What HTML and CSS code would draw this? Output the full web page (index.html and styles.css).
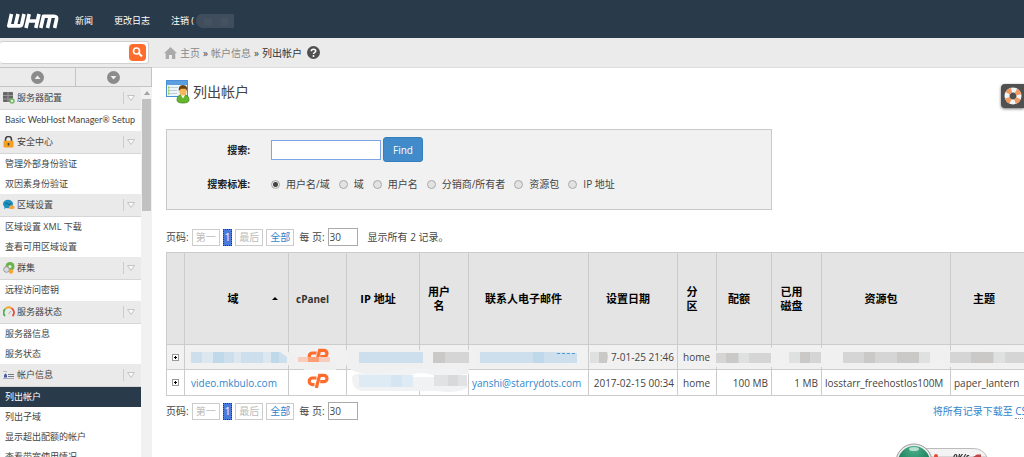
FILE: index.html
```html
<!DOCTYPE html>
<html lang="zh-CN">
<head>
<meta charset="utf-8">
<title>WHM - 列出帐户</title>
<link rel="stylesheet" href="styles.css">
</head>
<body>
<svg class="defs" aria-hidden="true">
  <defs>
    <symbol id="chev" viewBox="0 0 16 12"><path d="M1.500 0V12" stroke="#ccc" fill="none"/><path d="M5.500 3.500h7l-3.500 5z" fill="#fafafa" stroke="#c4c4c4"/></symbol>
    <symbol id="cp" viewBox="0 0 22 15"><g fill="none" stroke="#ff6c2c" stroke-width="3.200"><path d="M9.500 5H5.500a3.300 3.300 0 0 0 0 6.600H7.500"/><path d="M9.300 15L12.600 2.300h4.200a3.100 3.100 0 0 1 0 6.400h-3.600"/></g></symbol>
    <symbol id="plus" viewBox="0 0 7 7"><rect x=".5" y=".5" width="6" height="6" fill="#fff" stroke="#999"/><path d="M2 3.500h3M3.500 2v3" stroke="#000"/></symbol>
  </defs>
</svg>

<header class="top">
  <svg class="logo" viewBox="0 0 53 16" role="img" aria-label="WHM"><g fill="none" stroke="#fff" stroke-width="3.600" stroke-linejoin="round"><path d="M5.500 1L2.800 12.900H13.500Q15.300 12.900 15.800 11L18 1M12 1L9.200 12.900"/><path d="M23.200 1L20 15M33 1L29.800 15M22 8H31"/><path d="M34.800 15L37.500 3.200H48Q51.300 3.200 50.500 6.500L48.600 15M44.200 3.200L41.500 15"/></g></svg>
  <nav class="top-links">
    <a href="#">新闻</a>
    <a href="#">更改日志</a>
    <a href="#" class="logout">注销 (<svg viewBox="0 0 38 14" aria-hidden="true"><path d="M5 0H38V14H6Q0 12 0 7Q0 1 5 0z" fill="#3f4d5d"/><path d="M8 5h8v6H8zM25 4h7v7h-7z" fill="#445262"/></svg></a>
  </nav>
</header>

<div class="frame">
  <aside class="side">
    <form class="search">
      <input type="text" aria-label="搜索菜单">
      <button type="button" aria-label="搜索"><svg viewBox="0 0 17 17"><circle cx="7.500" cy="7" r="3" fill="none" stroke="#fff" stroke-width="1.600"/><path d="M9.800 9.300L13 12.500" stroke="#fff" stroke-width="2"/></svg></button>
    </form>
    <div class="steps">
      <button type="button" aria-label="全部折叠"><svg viewBox="0 0 13 13"><circle cx="6.500" cy="6.500" r="6.500" fill="#8b8b8b"/><path d="M3.500 8L6.500 4.500L9.500 8z" fill="#eee"/></svg></button>
      <button type="button" aria-label="全部展开"><svg viewBox="0 0 13 13"><circle cx="6.500" cy="6.500" r="6.500" fill="#8b8b8b"/><path d="M3.500 5L6.500 8.500L9.500 5z" fill="#eee"/></svg></button>
    </div>
    <div class="menu-wrap">
      <nav class="menu">
        <section class="group">
          <h2><svg class="ico" viewBox="0 0 12 12"><rect x="0" y="0" width="10" height="10" rx="1" fill="#666"/><path d="M0 3.500H10M0 7H10M5 0V10" stroke="#999"/><circle cx="9" cy="9" r="2.800" fill="#7db96c"/><circle cx="9" cy="9" r="1" fill="#fff"/></svg><span>服务器配置</span><svg class="chev"><use href="#chev"/></svg></h2>
          <a href="#" class="latin">Basic WebHost Manager® Setup</a>
        </section>
        <section class="group">
          <h2><svg class="ico" viewBox="0 0 12 12"><path d="M2.500 6V3.500a3 3 0 0 1 6 0V6" fill="none" stroke="#444" stroke-width="1.600"/><rect x=".5" y="4.800" width="10" height="6.700" rx="1" fill="#f5a01e"/><rect x="4.700" y="7" width="1.600" height="2.500" fill="#444"/></svg><span>安全中心</span><svg class="chev"><use href="#chev"/></svg></h2>
          <a href="#">管理外部身份验证</a>
          <a href="#">双因素身份验证</a>
        </section>
        <section class="group">
          <h2><svg class="ico" viewBox="0 0 12 12"><ellipse cx="5" cy="5" rx="5" ry="4.200" fill="#1d91bd"/><path d="M1 10l1-3 3 1z" fill="#1d91bd"/><path d="M2 5q1.500-2 3 0t3-1" fill="none" stroke="#0b6287"/><rect x="6" y="6.500" width="5.500" height="3.500" rx="1.500" fill="#f9a33a"/></svg><span>区域设置</span><svg class="chev"><use href="#chev"/></svg></h2>
          <a href="#">区域设置 XML 下载</a>
          <a href="#">查看可用区域设置</a>
        </section>
        <section class="group">
          <h2><svg class="ico" viewBox="0 0 12 12"><circle cx="7" cy="4.500" r="4.500" fill="#6cb24a"/><circle cx="7" cy="4.500" r="1.500" fill="#e5f3df"/><circle cx="3.500" cy="7.500" r="2.800" fill="#ddd" stroke="#999"/><circle cx="8" cy="9.500" r="2.200" fill="#f5a733"/></svg><span>群集</span><svg class="chev"><use href="#chev"/></svg></h2>
          <a href="#">远程访问密钥</a>
        </section>
        <section class="group">
          <h2><svg class="ico" viewBox="0 0 12 12"><g fill="none" stroke-width="1.800"><path d="M2 10A4.800 4.800 0 0 1 2.200 3" stroke="#4fae4c"/><path d="M2.200 3A4.800 4.800 0 0 1 8.500 2.300" stroke="#f2a530"/><path d="M8.500 2.300A4.800 4.800 0 0 1 9.500 10" stroke="#e04f3b"/><path d="M5.500 8L8 5" stroke="#aaa" stroke-width="1"/></g></svg><span>服务器状态</span><svg class="chev"><use href="#chev"/></svg></h2>
          <a href="#">服务器信息</a>
          <a href="#">服务状态</a>
        </section>
        <section class="group">
          <h2><svg class="ico" viewBox="0 0 12 12"><path d="M0 2.500H4" stroke="#bbb"/><path d="M1 8.500V6.500q1.500-4 3 0V8.500z" fill="#3c58a8"/><path d="M5 5.500H11M5 7.500H11" stroke="#778" stroke-width="1.200"/><path d="M0 9.500H11" stroke="#aab"/></svg><span>帐户信息</span><svg class="chev"><use href="#chev"/></svg></h2>
          <a href="#" class="current">列出帐户</a>
          <a href="#">列出子域</a>
          <a href="#">显示超出配额的帐户</a>
          <a href="#">查看带宽使用情况</a>
        </section>
      </nav>
      <div class="scroll" aria-hidden="true"><i class="arrow"></i><i class="thumb"></i></div>
    </div>
  </aside>

  <main class="main">
    <nav class="crumbs">
      <svg class="home" viewBox="0 0 13 12"><path d="M6.500 0L13 6.200H11.300V12H8V8H5V12H1.700V6.200H0z" fill="#aaa"/></svg>
      <a href="#">主页</a><b>»</b><a href="#">帐户信息</a><b>»</b><span>列出帐户</span>
      <svg class="help" viewBox="0 0 13 13"><circle cx="6.500" cy="6.500" r="6.500" fill="#505050"/><path d="M4.300 5.200Q4.300 3.200 6.500 3.200T8.700 5Q8.700 6 7.500 6.600Q6.500 7.100 6.500 8" fill="none" stroke="#fff" stroke-width="1.600"/><circle cx="6.500" cy="10" r="1" fill="#fff"/></svg>
    </nav>

    <div class="content">
      <h1><svg viewBox="0 0 24 24"><rect x=".5" y=".5" width="21" height="16" fill="#eef6fd" stroke="#4c8fd6"/><rect x="1" y="1" width="20" height="4" fill="#5b9fe3"/><path d="M4 7.500H12M4 10.500H11M4 13.500H11" stroke="#c3cbd4"/><path d="M2 7.500h1.500M2 10.500h1.500M2 13.500h1.500" stroke="#8cc63f" stroke-width="2"/><path d="M11 20Q11 14.500 17 14.500T23 20Q23 23 17 23T11 20z" fill="#66b52e" stroke="#3f8a1c" stroke-width=".8"/><path d="M15 15l2 3.500 2-3.500z" fill="#fff"/><ellipse cx="17" cy="11" rx="3.600" ry="4.500" fill="#f6b65a"/><path d="M12.800 11Q12 5 17 5T21.200 11L19.500 8.800H15z" fill="#6c4313"/></svg>列出帐户</h1>

      <form class="panel">
        <label class="caption" for="q">搜索:</label>
        <div class="field"><input id="q" type="text"><button type="button">Find</button></div>
        <span class="caption">搜索标准:</span>
        <div class="radios">
          <label><input type="radio" name="by" checked>用户名/域</label>
          <label><input type="radio" name="by">域</label>
          <label><input type="radio" name="by">用户名</label>
          <label><input type="radio" name="by">分销商/所有者</label>
          <label><input type="radio" name="by">资源包</label>
          <label><input type="radio" name="by">IP 地址</label>
        </div>
      </form>

      <div class="pager">
        <span>页码:</span>
        <button type="button" disabled>第一</button><button type="button" class="page">1</button><button type="button" disabled>最后</button><button type="button">全部</button>
        <label for="per1">每 页:</label><input id="per1" type="text" value="30">
        <span class="total">显示所有 2 记录。</span>
      </div>

      <div class="grid">
        <table>
          <colgroup><col class="c-open"><col class="c-domain"><col class="c-cp"><col class="c-ip"><col class="c-user"><col class="c-mail"><col class="c-date"><col class="c-part"><col class="c-quota"><col class="c-disk"><col class="c-pack"><col class="c-theme"></colgroup>
          <thead>
            <tr><th></th><th class="sorted"><div><span>域</span><i></i></div></th><th class="brand">cPanel</th><th>IP 地址</th><th>用户<br>名</th><th>联系人电子邮件</th><th>设置日期</th><th>分<br>区</th><th>配额</th><th>已用<br>磁盘</th><th>资源包</th><th>主题</th></tr>
          </thead>
          <tbody>
            <tr class="odd"><td class="mid"><svg class="plus"><use href="#plus"/></svg></td><td></td><td class="mid logo-cell"><svg class="cp"><use href="#cp"/></svg></td><td></td><td></td><td></td><td class="num">7-01-25 21:46</td><td class="part">home</td><td></td><td></td><td></td><td></td></tr>
            <tr><td class="mid"><svg class="plus"><use href="#plus"/></svg></td><td class="domain"><a href="#">video.mkbulo.com</a></td><td class="mid logo-cell"><svg class="cp"><use href="#cp"/></svg></td><td></td><td></td><td><a href="#">yanshi@starrydots.com</a></td><td class="num">2017-02-15 00:34</td><td class="part">home</td><td class="num">100 MB</td><td class="num">1 MB</td><td>losstarr_freehostlos100M</td><td>paper_lantern</td></tr>
          </tbody>
        </table>
        <svg class="masks" viewBox="0 0 862 51" aria-hidden="true">
          <g fill="#f0f0f0">
            <path d="M22 5H112Q128 8 137 12V24Q128 25 118 17H22z"/>
            <path d="M180 5Q190 2 250 5H303V29H200Q180 26 180 18z"/>
            <path d="M310 5H400V22H310zM424 6H440V18H424z"/>
            <path d="M550 6Q600 0 700 4L862 7V22H550z"/>
          </g>
          <path d="M186 33Q186 27 200 29L240 24H290Q304 34 302 42Q295 49 270 46H195Q186 44 186 33z" fill="#f1f2f3"/>
          <path d="M240 32Q254 24 272 32z" fill="#fff"/>
          <g fill="#cddfec"><path d="M25 7H114L121 12V18H25zM193 7H257V18H193zM314 7H387L411 8V18H314z"/></g>
          <path d="M36 7h11v11H36zM68 7h7v11h-7zM97 7h8v11h-8z" fill="#dde7ef"/>
          <path d="M47 7h11v11H47zM105 7h8v11h-8zM367 7h11v11h-11z" fill="#bfd8ea"/>
          <path d="M391 8.500h20" stroke="#4a9bd5" stroke-dasharray="3 2"/>
          <path d="M193 30h54v12h-54z" fill="#dfebf4"/><path d="M225 30h11v12h-11z" fill="#d5e5f1"/>
          <path d="M268 30h33v11h-33z" fill="#e1e2e3"/><path d="M282 30h10v11h-10z" fill="#d8d9da"/>
          <g fill="#d5d5d5"><path d="M267 7h36v11h-36zM424 7h17q3 5-1 11h-16zM550 8h55v10h-55zM623 7h32v11h-32zM677 7h87v11h-87zM784 7h78v11h-78z"/></g>
          <path d="M267 7h12v11h-12zM433 7h8v11h-8zM560 8h12v10h-12zM634 7h10v11h-10zM698 7h11v11h-11zM731 7h22v11h-22zM805 7h22v11h-22z" fill="#cac9c8"/>
          <path d="M424 7h9v11h-9zM573 8h10v10h-10zM623 7h11v11h-11zM753 7h11v11h-11zM828 7h11v11h-11z" fill="#dfe1e1"/>
          <path d="M132 12h32v5h-32z" fill="#f8cdbd"/><path d="M142 12h11v5h-11z" fill="#fc9d73"/><path d="M138 17h32v8h-32z" fill="#efefef"/>
        </svg>
      </div>

      <div class="pager foot">
        <span>页码:</span>
        <button type="button" disabled>第一</button><button type="button" class="page">1</button><button type="button" disabled>最后</button><button type="button">全部</button>
        <label for="per2">每 页:</label><input id="per2" type="text" value="30">
        <a class="csv" href="#">将所有记录下载至 <abbr>CSV</abbr></a>
      </div>
    </div>
  </main>
</div>

<button type="button" class="support" aria-label="支持"><svg viewBox="0 0 18 18"><circle cx="9" cy="9" r="6" fill="none" stroke="#f1f6fa" stroke-width="5"/><circle cx="9" cy="9" r="6" fill="none" stroke="#f39a62" stroke-width="5" stroke-dasharray="4.700 4.720" stroke-dashoffset="-2.400"/></svg></button>

<svg class="speed" viewBox="0 0 96 14" aria-hidden="true">
  <defs><radialGradient id="ball" cx=".5" cy=".1" r=".7"><stop offset="0" stop-color="#4bb08a"/><stop offset="1" stop-color="#0f7350"/></radialGradient></defs>
  <path d="M26 5.500H78Q88 5.500 92 14H26z" fill="#f3f3f3" stroke="#bbb"/>
  <circle cx="19" cy="19" r="18" fill="#eee" stroke="#999"/><circle cx="19" cy="19" r="16" fill="url(#ball)"/>
  <ellipse cx="19" cy="6" rx="5" ry="2" fill="#b5dfce"/>
  <circle cx="41" cy="13" r="2" fill="#e34b36"/><path d="M78 14l4-2.500h4V14z" fill="#b44"/>
  <text x="58" y="17">0K/s</text>
</svg>
</body>
</html>
```
FILE: styles.css
```css
* { box-sizing: border-box; }

body {
  margin: 0;
  height: 100vh;
  display: flex;
  flex-direction: column;
  overflow: hidden;
  background: #fff;
  color: #444;
  font: 10px/14px "Open Sans", "Noto Sans CJK SC", sans-serif;
}

a { color: #2f86cc; text-decoration: none; }
button, input { font: inherit; color: inherit; margin: 0; }
svg { display: block; flex: none; }
.defs { position: absolute; width: 0; height: 0; }

/* header */
.top {
  flex: none;
  display: flex;
  align-items: center;
  gap: 16px;
  height: 38px;
  padding: 3px 6px 0;
  background: #293a4a;
}
.logo { width: 53px; height: 16px; }
.top-links { display: flex; gap: 21px; font-size: 9px; }
.top-links a { display: flex; align-items: center; color: #fff; white-space: pre; }
.logout svg { width: 38px; height: 14px; margin-left: 2px; }

.frame { flex: 1; display: flex; min-height: 0; }

/* sidebar */
.side {
  flex: none;
  width: 152px;
  display: flex;
  flex-direction: column;
  background: #ebebeb;
}
.search {
  display: flex;
  align-items: center;
  margin: 3px 3px;
  margin-left: 0;
  height: 23px;
  padding-right: 2px;
  background: #fff;
  border: 1px solid #d0d0d0;
  border-left: 0;
  border-radius: 3px;
}
.search input { flex: 1; min-width: 0; border: 0; background: none; outline: 0; }
.search button { padding: 0; border: 0; border-radius: 4px; background: #ff6c2c; }
.search button svg { width: 17px; height: 17px; }
.steps { display: flex; height: 20px; border: solid #c4c4c4; border-width: 1px 1px 1px 0; }
.steps button {
  flex: 1;
  display: flex;
  align-items: center;
  justify-content: center;
  padding: 0;
  border: 0;
  background: none;
}
.steps button + button { border-left: 1px solid #c4c4c4; }
.steps svg { width: 13px; height: 13px; }

.menu-wrap { flex: 1; display: flex; min-height: 0; }
.menu { flex: 1; min-width: 0; overflow: hidden; background: #fff; font-size: 9px; }
.group { min-height: 44px; }
.menu h2 {
  display: flex;
  align-items: center;
  gap: 2px;
  height: 23px;
  margin: 0;
  padding: 0 3px;
  background: #eaeaea;
  border-bottom: 1px solid #d6d6d6;
  font-size: 9px;
  font-weight: 400;
}
.menu h2 span { flex: 1; }
.ico { width: 12px; height: 12px; }
.chev { width: 16px; height: 12px; }
.menu a { display: block; height: 20px; padding-left: 5px; line-height: 20px; color: #444; white-space: nowrap; }
.menu .latin { font-family: Lato, sans-serif; }
.menu .current { background: #293a4a; color: #fff; }
.scroll { flex: none; width: 11px; background: #f1f1f1; padding: 4px 1px 0; }
.arrow { display: block; margin: 0 2px 4px; border: solid transparent; border-width: 0 3px 4px; border-bottom-color: #a3a3a3; width: 0; }
.thumb { display: block; height: 112px; background: #c1c1c1; }

/* main column */
.main { flex: 1; min-width: 0; overflow: hidden; }
.crumbs {
  display: flex;
  align-items: center;
  gap: 3px;
  height: 30px;
  padding-left: 12px;
  background: #ebebeb;
  border-bottom: 1px solid #ddd;
}
.crumbs a { color: #888; }
.crumbs b { font-weight: 400; }
.crumbs span { color: #333; }
.home { width: 13px; height: 12px; }
.help { width: 13px; height: 13px; margin-left: 2px; }

.content { padding: 12px 0 0 14px; }
h1 { display: flex; align-items: center; gap: 3px; margin: 0; height: 24px; font-size: 14px; font-weight: 400; }
h1 svg { width: 24px; height: 24px; }

.panel {
  display: grid;
  grid-template-columns: 83px 1fr;
  column-gap: 21px;
  row-gap: 15px;
  align-items: center;
  width: 606px;
  max-width: 100%;
  margin-top: 25px;
  padding: 7px 0 18px;
  background: #f1f1f1;
  border: 1px solid #c9c9c9;
}
.caption { text-align: right; font-weight: 700; color: #222; }
.field { display: flex; align-items: center; gap: 2px; }
.field input { width: 110px; height: 20px; border: 1px solid #7ea6e6; background: #fff; outline: 0; }
.field button { height: 25px; padding: 0 9px; border: 1px solid #357ebd; border-radius: 3px; background: #428bca; color: #fff; }
.radios { display: flex; gap: 9px; white-space: nowrap; }
.radios label { display: flex; align-items: center; gap: 6px; }
.radios input {
  appearance: none;
  width: 9px;
  height: 9px;
  border: 1px solid #aaa;
  border-radius: 50%;
  background: #e2e2e2;
}
.radios input:checked { background: radial-gradient(circle, #444 0 2px, #e6e6e6 3px); }

.pager { display: flex; align-items: center; gap: 3px; height: 18px; margin-top: 18px; white-space: nowrap; }
.pager button { height: 17px; padding: 0 3px; border: 1px solid #ccc; background: #fff; color: #2f86cc; line-height: 14px; }
.pager button:disabled { color: #bbb; }
.pager .page { padding: 0 1px; border: 1px dotted #334; background: #4a7bdc; color: #fff; }
.pager label { margin-left: 2px; }
.pager input { width: 30px; height: 18px; padding: 0 1px; border: 1px solid #aaa; }
.total { margin-left: 7px; }

.grid { position: relative; width: 862px; margin-top: 6px; }
table { width: 100%; table-layout: fixed; border-collapse: collapse; font-size: 10px; }
th, td { border: 1px solid #ccc; white-space: nowrap; }
th { height: 92px; padding: 0 10px 0 0; background: #e4e4e4; color: #000; font-size: 11px; }
td { height: 26px; padding: 0 3px; }
.odd td { background: #f1f1f1; }
.odd td { height: 25px; }
.mid svg { margin: auto; }
.logo-cell { padding-bottom: 4px; }
.domain { padding-left: 6px; }
.part { padding-left: 5px; }
.num { text-align: right; }
.brand { color: #333; font-size: 10px; }
.sorted { padding-right: 0; }
.sorted div { display: flex; align-items: center; padding: 0 10px 0 9px; }
.sorted span { flex: 1; }
.sorted i { border: solid transparent; border-width: 0 3px 3px; border-bottom-color: #000; }
.plus { width: 7px; height: 7px; }
.cp { width: 22px; height: 15px; }
.c-open { width: 18px; }
.c-domain { width: 104px; }
.c-cp { width: 58px; }
.c-ip { width: 73px; }
.c-user { width: 49px; }
.c-mail { width: 120px; }
.c-date { width: 89px; }
.c-part { width: 39px; }
.c-quota { width: 55px; }
.c-disk { width: 50px; }
.c-pack { width: 129px; }
.masks { position: absolute; left: 0; bottom: 0; width: 862px; height: 51px; }

.foot { width: 867px; margin-top: 6px; }
.csv { margin-left: auto; }
.csv abbr { border-bottom: 1px dotted #999; }

/* floating widgets */
.support {
  position: fixed;
  top: 84px;
  right: 0;
  width: 23px;
  height: 24px;
  padding: 0 0 0 3px;
  border: 0;
  border-radius: 4px 0 0 4px;
  background: #505050;
  box-shadow: 0 1px 3px #777;
}
.support svg { width: 18px; height: 18px; }
.speed { position: fixed; right: 33px; bottom: 0; width: 96px; height: 14px; }
.speed text { font: italic 700 8px "Open Sans", sans-serif; fill: #333; }
```
